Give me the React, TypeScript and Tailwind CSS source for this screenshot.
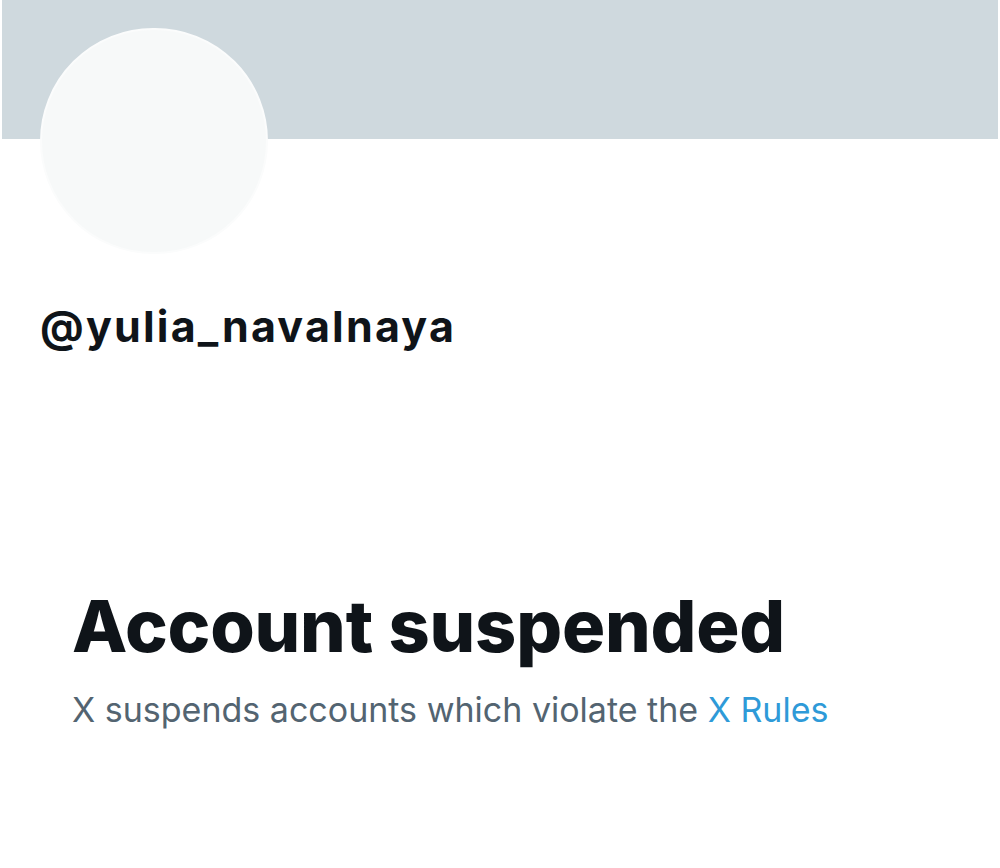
export default function App() {
  return (
    <div className="w-[1000px] h-[868px] bg-white overflow-hidden font-['Inter',sans-serif]">
      {/* Banner */}
      <div className="mx-[2px] h-[139px] bg-[#cfd9de]" />

      {/* Avatar + handle */}
      <div className="px-[40px]">
        <div className="-mt-[111px] w-[228px] h-[226px] rounded-full bg-[#f7f9f9] border-2 border-[#fbfcfc]" />
        <div className="mt-[42px] text-[43px] leading-[60px] font-bold text-[#0f1419] tracking-[2.2px]">
          @yulia_navalnaya
        </div>
      </div>

      {/* Suspended notice */}
      <div className="px-[72px] mt-[230px]">
        <h1 className="text-[72px] leading-[80px] font-extrabold text-[#0f1419] tracking-[-0.2px]">
          Account suspended
        </h1>
        <p className="mt-[22px] text-[34px] leading-[44px] text-[#536471]">
          X suspends accounts which violate the{" "}
          <a className="text-[#2e9ad8]">X Rules</a>
        </p>
      </div>
    </div>
  );
}
